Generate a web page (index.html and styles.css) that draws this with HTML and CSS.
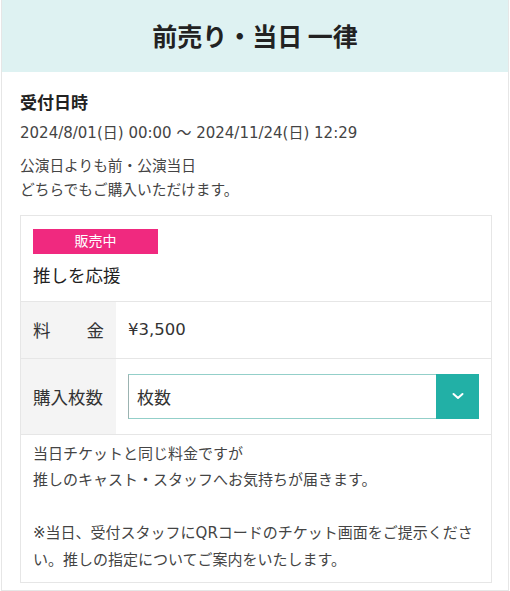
FILE: index.html
```html
<!DOCTYPE html>
<html lang="ja">
<head>
    <meta charset="UTF-8">
    <meta name="viewport" content="width=device-width, initial-scale=1.0">
    <title>チケット</title>
    <link rel="stylesheet" href="styles.css">
</head>
<body>
    <div class="ticket-card">
        <div class="ticket-header">
            <h1>前売り・当日 一律</h1>
        </div>

        <div class="ticket-body">
            <h2 class="section-title">受付日時</h2>
            <p class="period">2024/8/01(日) 00:00 ～ 2024/11/24(日) 12:29</p>
            <p class="note">公演日よりも前・公演当日<br>どちらでもご購入いただけます。</p>

            <div class="plan">
                <div class="plan-head">
                    <span class="badge">販売中</span>
                    <p class="plan-name">推しを応援</p>
                </div>

                <table class="plan-table">
                    <tr>
                        <th><span class="justify">料金</span></th>
                        <td class="price">¥3,500</td>
                    </tr>
                    <tr>
                        <th>購入枚数</th>
                        <td>
                            <div class="select">
                                <span class="select-text">枚数</span>
                                <span class="select-btn">
                                    <svg viewBox="0 0 14 14" fill="none" stroke="currentColor" stroke-width="2" stroke-linecap="round" stroke-linejoin="round">
                                        <path d="M2.5 5l4.5 4 4.5-4"></path>
                                    </svg>
                                </span>
                            </div>
                        </td>
                    </tr>
                </table>

                <div class="plan-desc">
                    当日チケットと同じ料金ですが<br>
                    推しのキャスト・スタッフへお気持ちが届きます。<br>
                    <br>
                    ※当日、受付スタッフにQRコードのチケット画面をご提示ください。推しの指定についてご案内をいたします。
                </div>
            </div>
        </div>
    </div>
</body>
</html>
```

FILE: styles.css
```css
:root {
    --header-bg: #def2f2;
    --border: #e6e6e6;
    --text: #222;
    --text-sub: #444;
    --th-bg: #f4f4f4;
    --accent: #22b0a6;
    --badge: #f0297f;
}

* {
    margin: 0;
    padding: 0;
    box-sizing: border-box;
}

body {
    font-family: "DejaVu Sans", "Noto Sans CJK JP", sans-serif;
    color: var(--text);
    background: #fff;
    padding: 0 1px;
}

.ticket-card {
    border: 1px solid var(--border);
    border-top: none;
    min-height: 591px;
}

.ticket-header {
    background-color: var(--header-bg);
    height: 72px;
    display: flex;
    align-items: center;
    justify-content: center;
    padding-bottom: 3px;
}

.ticket-header h1 {
    font-family: "Noto Sans CJK JP", sans-serif;
    font-size: 25px;
    font-weight: 700;
}

.ticket-body {
    padding: 18px 16px 0 18px;
}

.section-title {
    font-family: "Noto Sans CJK JP", sans-serif;
    font-size: 17px;
    font-weight: 700;
    line-height: 24px;
}

.period {
    font-size: 15px;
    color: var(--text-sub);
    line-height: 24px;
    margin-top: 7px;
}

.note {
    font-size: 14.7px;
    color: var(--text-sub);
    line-height: 23.5px;
    margin-top: 9px;
}

.plan {
    border: 1px solid var(--border);
    margin-top: 14px;
}

.plan-head {
    padding: 13px 12px 13px;
    border-bottom: 1px solid var(--border);
}

.badge {
    display: block;
    width: 125px;
    height: 25px;
    line-height: 25px;
    background-color: var(--badge);
    color: #fff;
    font-size: 14px;
    text-align: center;
}

.plan-name {
    font-size: 17.5px;
    line-height: 24px;
    margin-top: 10px;
    color: var(--text);
}

.plan-table {
    width: 100%;
    border-collapse: collapse;
}

.plan-table tr {
    border-bottom: 1px solid var(--border);
}

.plan-table th {
    width: 95px;
    background-color: var(--th-bg);
    font-size: 17.5px;
    font-weight: 400;
    text-align: left;
    padding: 0 12px;
    color: #333;
    white-space: nowrap;
}

.plan-table tr:first-child th,
.plan-table tr:first-child td {
    height: 56px;
}

.plan-table tr:last-child th,
.plan-table tr:last-child td {
    height: 76px;
}

.justify {
    display: block;
    text-align: justify;
    text-align-last: justify;
}

.plan-table td {
    padding: 0 12px;
}

.price {
    font-size: 16.5px;
    color: #333;
}

.select {
    display: flex;
    height: 45px;
    border: 1px solid #93cfc9;
    border-left-color: #9bb3b1;
}

.select-text {
    flex: 1;
    display: flex;
    align-items: center;
    padding-left: 8px;
    font-size: 17px;
    color: #333;
}

.select-btn {
    width: 43px;
    background-color: var(--accent);
    color: #fff;
    display: flex;
    align-items: center;
    justify-content: center;
    margin: -1px -1px -1px 0;
}

.select-btn svg {
    width: 14px;
    height: 14px;
}

.plan-desc {
    padding: 6px 12px 9px;
    font-size: 15px;
    line-height: 26.5px;
    color: var(--text-sub);
}
```
